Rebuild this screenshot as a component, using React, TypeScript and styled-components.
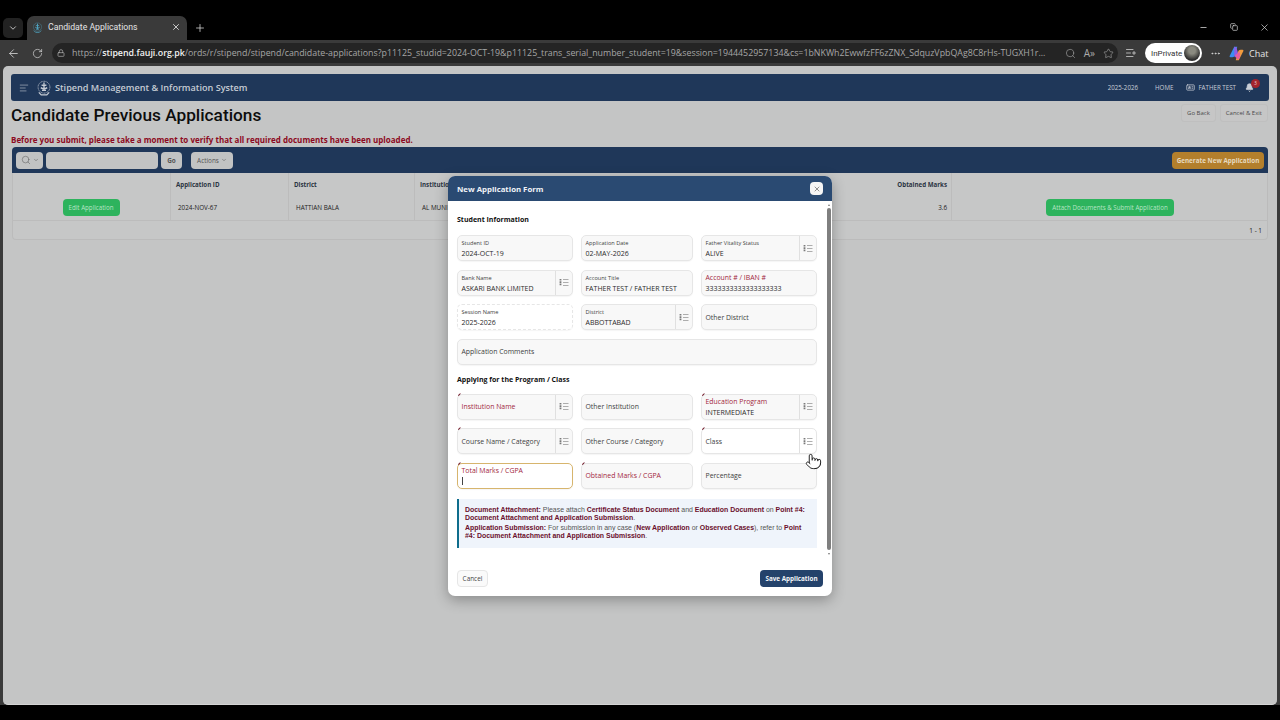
import React from 'react';
import styled, { createGlobalStyle } from 'styled-components';
import {
  ArrowLeft, RotateCw, Lock, Search, Star, X, Plus, ChevronDown, Minus, Copy,
  MoreHorizontal, ListPlus, Bell, IdCard, AlignLeft, Pointer,
} from 'lucide-react';

const GlobalStyle = createGlobalStyle`
  html, body { margin: 0; padding: 0; background: #000; }
  * { box-sizing: border-box; }
  body { font-family: "Open Sans", "Noto Sans", sans-serif; }
`;

const Frame = styled.div`
  position: relative;
  width: 1280px;
  height: 720px;
  overflow: hidden;
  background: #000;
  display: flex;
  flex-direction: column;
`;

/* browser chrome */
const TabStrip = styled.div`
  display: flex;
  align-items: center;
  height: 24px;
  margin-top: 16px;
  padding-left: 3px;
  color: #ddd;
`;

const TabMenu = styled.div`
  width: 20px;
  height: 20px;
  border-radius: 5px;
  background: #222;
  display: flex;
  align-items: center;
  justify-content: center;
  margin-right: 4px;
`;

const Tab = styled.div`
  width: 160px;
  height: 24px;
  border-radius: 7px 7px 0 0;
  background: #3a3a3a;
  display: flex;
  align-items: center;
  padding: 0 6px 2px 5px;
  font-family: Roboto, sans-serif;
  font-size: 8.7px;
  color: #e4e4e4;
`;

const TabTitle = styled.span`
  flex: 1;
  margin-left: 5px;
  white-space: nowrap;
`;

const NewTab = styled.div`
  margin-left: 7px;
  display: flex;
`;

const WindowButtons = styled.div`
  margin-left: auto;
  margin-bottom: 2px;
  width: 94px;
  display: flex;
  justify-content: space-between;
  padding-right: 10px;
  padding-left: 13px;
  align-items: center;
`;

const BrowserBar = styled.div`
  height: 26px;
  background: #3a3a3a;
  display: flex;
  align-items: center;
  padding-left: 7px;
  color: #d8d8d8;
`;

const NavIcons = styled.div`
  width: 45px;
  display: flex;
  gap: 12px;
  align-items: center;
`;

const AddressBar = styled.div`
  width: 1066px;
  height: 20px;
  border-radius: 10px;
  background: #242424;
  display: flex;
  align-items: center;
  padding: 0 4px 0 5px;
  gap: 7px;
`;

const Url = styled.div`
  flex: 1;
  font-family: "Open Sans", sans-serif;
  font-size: 8.83px;
  color: #a6a6a6;
  white-space: nowrap;
`;

const UrlHost = styled.span`
  color: #f2f2f2;
  font-weight: 600;
`;

const AddressTools = styled.div`
  display: flex;
  gap: 8px;
  align-items: center;
  color: #aaa;
`;

const ReadAloud = styled.span`
  font-size: 10px;
  color: #aaa;
`;

const BarRight = styled.div`
  flex: 1;
  display: flex;
  align-items: center;
  padding-left: 7px;
  gap: 8px;
`;

const InPrivate = styled.div`
  width: 57px;
  height: 20px;
  border-radius: 10px;
  background: #fff;
  color: #333;
  font-family: Roboto, sans-serif;
  font-size: 8px;
  display: flex;
  align-items: center;
  justify-content: space-between;
  padding: 0 2px 0 6px;
`;

const Avatar = styled.div`
  width: 16px;
  height: 16px;
  border-radius: 50%;
  background: radial-gradient(circle at 50% 35%, #8a8a80 25%, #2e2e2e 70%);
`;

const ChatLabel = styled.div`
  display: flex;
  align-items: center;
  gap: 5px;
  font-size: 9px;
  color: #e6e6e6;
`;

const WindowBody = styled.div`
  height: 639px;
  padding: 0 3px;
  background: #3a3a3a;
`;

/* page */
const Page = styled.main`
  position: relative;
  height: 100%;
  padding: 8px 8px 0;
  border-radius: 5px;
  border-bottom: 1px solid #d4d4d4;
  background: #c4c5c5;
`;

const NavBar = styled.header`
  height: 27px;
  border-radius: 3px;
  background: #1f3759;
  display: flex;
  align-items: center;
  padding: 0 6px 0 8px;
  color: #c6ccd4;
`;

const Brand = styled.div`
  margin-left: 7px;
  display: flex;
  align-items: center;
  gap: 3px;
  font-size: 9.1px;
  font-weight: 600;
`;

const NavLinks = styled.nav`
  margin-left: auto;
  display: flex;
  align-items: center;
  font-size: 6.2px;
  color: #c9ced6;
`;

const NavLink = styled.span<{ $gap: number }>`
  margin-right: ${p => p.$gap}px;
`;

const UserLink = styled.span`
  display: flex;
  align-items: center;
  gap: 3px;
  margin-right: 9px;
`;

const BellWrap = styled.span`
  position: relative;
  display: flex;
  margin-right: 9px;
`;

const BellBadge = styled.span`
  position: absolute;
  top: -4px;
  right: -6px;
  width: 9px;
  height: 9px;
  border-radius: 50%;
  background: #a3232c;
  color: #e8d0d0;
  font-size: 5px;
  line-height: 9px;
  text-align: center;
`;

const TitleRow = styled.div`
  height: 29px;
  padding-bottom: 2px;
  display: flex;
  align-items: center;
  justify-content: space-between;
`;

const PageTitle = styled.h1`
  margin: 0;
  font-family: Roboto, sans-serif;
  font-size: 17.25px;
  font-weight: 500;
  color: #0d0d0d;
`;

const TitleActions = styled.div`
  display: flex;
  gap: 4px;
  margin-top: -4px;
  margin-right: 1px;
`;

const GhostButton = styled.button`
  height: 18px;
  padding: 0 5px;
  border: 1px solid #bfbfbf;
  border-radius: 3px;
  background: #c6c6c6;
  color: #4a4a4a;
  font: 400 6px "Open Sans", sans-serif;
`;

const Warning = styled.div`
  margin-top: 3px;
  height: 14px;
  font-size: 8px;
  font-weight: 700;
  line-height: 13px;
  color: #8d0a22;
`;

const Region = styled.section`
  margin-left: 1px;
  width: 1256px;
  border-radius: 4px;
  background: #c6c7c7;
  box-shadow: inset 0 0 0 1px #bbb;
`;

const RegionBar = styled.div`
  height: 26px;
  border-radius: 4px 4px 0 0;
  background: #1f3759;
  display: flex;
  align-items: center;
  padding: 0 4px;
`;

const BarControl = styled.div<{ $w: number; $ml?: number; $bold?: boolean }>`
  width: ${p => p.$w}px;
  height: 17px;
  margin-left: ${p => p.$ml ?? 0}px;
  border-radius: 4px;
  background: #c2c3c3;
  color: #555;
  font-size: 6.4px;
  font-weight: ${p => (p.$bold ? 700 : 400)};
  display: flex;
  align-items: center;
  justify-content: center;
  gap: 2px;
`;

const GenerateButton = styled.button`
  margin-left: auto;
  width: 92px;
  height: 17px;
  border: 0;
  border-radius: 4px;
  background: #b37f2c;
  color: #e6d9bf;
  font: 700 6.3px "Open Sans", sans-serif;
  white-space: nowrap;
  padding: 0;
`;

const Table = styled.div`
  display: grid;
  grid-template-columns: 159px 118px 126px 537px 1fr;
`;

const Cell = styled.div<{ $head?: boolean; $center?: boolean; $last?: boolean }>`
  height: ${p => (p.$head ? 22 : 26)}px;
  display: flex;
  align-items: center;
  justify-content: ${p => (p.$center ? 'center' : 'flex-start')};
  padding: ${p => (p.$center ? '0' : `0 4px 0 ${p.$head ? 5 : 7}px`)};
  border-right: ${p => (p.$last ? '0' : '1px solid #bcbcbc')};
  border-bottom: ${p => (p.$head ? '0' : '1px solid #bcbcbc')};
  font-size: ${p => (p.$head ? 6.2 : 6.3)}px;
  font-weight: ${p => (p.$head ? 700 : 400)};
  color: ${p => (p.$head ? '#2b3442' : '#1d1d1d')};
  white-space: nowrap;
  overflow: hidden;
`;

const CellEnd = styled.span`
  margin-left: auto;
`;

const GreenButton = styled.button<{ $w: number }>`
  width: ${p => p.$w}px;
  height: 17px;
  border: 0;
  border-radius: 4px;
  background: #2db35d;
  color: #b8e4c6;
  font: 400 6.2px "Open Sans", sans-serif;
  white-space: nowrap;
  padding: 0;
`;

const Pagination = styled.div`
  height: 19px;
  display: flex;
  align-items: center;
  justify-content: flex-end;
  padding-right: 6px;
  font-size: 6.4px;
  color: #222;
`;

/* modal */
const ModalLayer = styled.div`
  position: absolute;
  inset: 0;
  padding-top: 2px;
  display: flex;
  align-items: center;
  justify-content: center;
`;

const Modal = styled.div`
  width: 384px;
  height: 420px;
  border-radius: 7px;
  background: #fff;
  box-shadow: 0 4px 14px rgba(0, 0, 0, 0.3);
  display: flex;
  flex-direction: column;
  overflow: hidden;
`;

const ModalHeader = styled.div`
  height: 25px;
  flex: none;
  background: #2a4a72;
  display: flex;
  align-items: center;
  justify-content: space-between;
  padding: 0 9px;
  color: #f0f3f7;
  font-size: 7.8px;
  font-weight: 700;
`;

const CloseButton = styled.div`
  width: 13px;
  height: 13px;
  border-radius: 4px;
  background: #f5f5f5;
  color: #5a5a5a;
  display: flex;
  align-items: center;
  justify-content: center;
`;

const ModalMiddle = styled.div`
  position: relative;
  flex: 1;
  min-height: 0;
  padding: 0 15px 0 9px;
`;

const ScrollTrack = styled.div`
  position: absolute;
  top: 7px;
  right: 1px;
  bottom: 10px;
  width: 4px;
  border-radius: 2px;
  background: #7f7f7f;

  &::before,
  &::after {
    content: '';
    position: absolute;
    left: 0.5px;
    border-left: 1.5px solid transparent;
    border-right: 1.5px solid transparent;
  }

  &::before {
    top: -4px;
    border-bottom: 2px solid #777;
  }

  &::after {
    bottom: -5px;
    border-top: 2px solid #777;
  }
`;

const SectionTitle = styled.h2<{ $top: number; $bottom: number }>`
  margin: ${p => p.$top}px 0 ${p => p.$bottom}px;
  font-size: 7px;
  line-height: 10px;
  font-weight: 700;
  color: #111;
`;

const FieldGrid = styled.div`
  display: grid;
  grid-template-columns: 116px 112px 116px;
  column-gap: 8px;
  row-gap: 8.5px;
`;

const FieldBox = styled.div<{ $full?: boolean; $dashed?: boolean; $focus?: boolean; $white?: boolean }>`
  position: relative;
  grid-column: ${p => (p.$full ? '1 / -1' : 'auto')};
  height: 26px;
  display: flex;
  border: 1px ${p => (p.$dashed ? 'dashed' : 'solid')} ${p => (p.$focus ? '#d7b56d' : '#e6e6e6')};
  border-radius: 5px;
  background: ${p => (p.$dashed || p.$focus || p.$white ? '#fff' : '#f8f8f8')};
  box-shadow: 0 1px 1px rgba(0, 0, 0, 0.04);
`;

const FieldBody = styled.div<{ $filled?: boolean }>`
  flex: 1;
  min-width: 0;
  display: flex;
  flex-direction: column;
  justify-content: center;
  padding-left: 3.5px;
  padding-top: ${p => (p.$filled ? 2 : 0)}px;
`;

const FloatLabel = styled.div<{ $req?: boolean; $large?: boolean }>`
  font-size: ${p => (p.$large ? 6.9 : 5.6)}px;
  line-height: ${p => (p.$large ? 9 : 8)}px;
  color: ${p => (p.$req ? '#a2263e' : '#3e3e3e')};
  white-space: nowrap;
`;

const FieldValue = styled.div`
  margin-top: 2px;
  font-size: 7px;
  line-height: 10px;
  color: #2a2a2a;
  white-space: nowrap;
`;

const Caret = styled.div`
  width: 1px;
  height: 8px;
  margin-top: 2px;
  background: #444;
`;

const PickButton = styled.div`
  width: 17px;
  flex: none;
  border-left: 1px solid #e0e0e0;
  display: flex;
  align-items: center;
  justify-content: center;
  color: #7a7a7a;
`;

const ReqMark = styled.span`
  position: absolute;
  top: -1px;
  left: 0;
  width: 3px;
  height: 1.4px;
  background: #6b1020;
  transform: rotate(-45deg);
`;

const Notice = styled.div`
  margin-top: 10px;
  height: 49px;
  padding: 7.5px 6px 0 6px;
  border-left: 2px solid #0f6d8c;
  background: #eff4fb;
  font-family: "Liberation Sans", Arial, sans-serif;
  font-size: 6.93px;
  line-height: 8px;
  color: #555;
`;

const NoticeLine = styled.p`
  margin: 0 0 2px;
`;

const Strong = styled.b`
  color: #6a0f2c;
  font-weight: 700;
`;

const ModalFooter = styled.div`
  height: 36px;
  flex: none;
  display: flex;
  align-items: flex-start;
  justify-content: space-between;
  padding: 10px 9px 0;
`;

const CancelButton = styled.button`
  width: 31px;
  height: 17px;
  border: 1px solid #e6e6e6;
  border-radius: 4px;
  background: #fafafa;
  color: #444;
  font: 400 6.4px "Open Sans", sans-serif;
  padding: 0;
`;

const SaveButton = styled.button`
  width: 63px;
  height: 17px;
  border: 0;
  border-radius: 4px;
  background: #24426b;
  color: #f3f5f8;
  font: 700 6.3px "Open Sans", sans-serif;
  padding: 0;
  white-space: nowrap;
`;

const Cursor = styled.div`
  position: absolute;
  left: 805px;
  top: 453px;
  display: flex;
  color: #111;
`;

type FieldDef = {
  label: string;
  value?: string;
  pick?: boolean;
  req?: boolean;
  mark?: boolean;
  full?: boolean;
  dashed?: boolean;
  focus?: boolean;
  white?: boolean;
};

const studentFields: FieldDef[] = [
  { label: 'Student ID', value: '2024-OCT-19' },
  { label: 'Application Date', value: '02-MAY-2026' },
  { label: 'Father Vitality Status', value: 'ALIVE', pick: true },
  { label: 'Bank Name', value: 'ASKARI BANK LIMITED', pick: true },
  { label: 'Account Title', value: 'FATHER TEST / FATHER TEST' },
  { label: 'Account # / IBAN #', value: '3333333333333333333', req: true },
  { label: 'Session Name', value: '2025-2026', dashed: true },
  { label: 'District', value: 'ABBOTTABAD', pick: true },
  { label: 'Other District' },
  { label: 'Application Comments', full: true },
];

const programFields: FieldDef[] = [
  { label: 'Institution Name', pick: true, req: true, mark: true },
  { label: 'Other Institution' },
  { label: 'Education Program', value: 'INTERMEDIATE', pick: true, req: true, mark: true },
  { label: 'Course Name / Category', pick: true, mark: true },
  { label: 'Other Course / Category' },
  { label: 'Class', pick: true, mark: true, white: true },
  { label: 'Total Marks / CGPA', req: true, mark: true, focus: true },
  { label: 'Obtained Marks / CGPA', req: true, mark: true },
  { label: 'Percentage' },
];

function PickIcon() {
  return (
    <svg width="10" height="9" viewBox="0 0 10 9" fill="none" stroke="currentColor">
      <path d="M1.5 1v7" strokeWidth="1.8" strokeDasharray="1.6 .7" />
      <path d="M4 1.5h5.5M4 4.5h5.5M4 7.5h5.5" strokeWidth="0.6" />
    </svg>
  );
}

function Field({ f }: { f: FieldDef }) {
  const filled = f.value !== undefined;
  return (
    <FieldBox $full={f.full} $dashed={f.dashed} $focus={f.focus} $white={f.white}>
      {f.mark && <ReqMark />}
      <FieldBody $filled={filled}>
        <FloatLabel $req={f.req} $large={(!filled && !f.focus) || f.req}>{f.label}</FloatLabel>
        {filled && <FieldValue>{f.value}</FieldValue>}
        {f.focus && <Caret />}
      </FieldBody>
      {f.pick && (
        <PickButton>
          <PickIcon />
        </PickButton>
      )}
    </FieldBox>
  );
}

function Crest({ size, color }: { size: number; color: string }) {
  return (
    <svg width={size} height={size} viewBox="0 0 20 20" fill="none" stroke={color} strokeWidth="0.9">
      <circle cx="10" cy="9" r="7.4" strokeDasharray="1.4 .6" />
      <path d="M10 3v10M7 6c2 1.2 4 1.2 6 0M6 9.5c2.4 1.8 5.6 1.8 8 0M7.5 13h5" strokeWidth="1.7" />
      <path d="M3.5 15.5l3 3.2h7l3-3.2" strokeWidth="1.5" />
    </svg>
  );
}

function Copilot() {
  return (
    <svg width="15" height="15" viewBox="0 0 20 20">
      <path d="M7 1h4L8 12c-.6 2-1.8 3-3.6 3H2C.8 15 .5 14 1 13z" fill="#3b8ef0" />
      <path d="M7 1c2 0 3 1 3.5 3L13 13l-4 2c-1 0-2-.5-2-2z" fill="#8d5de8" />
      <path d="M13 19H9l3-11c.6-2 1.8-3 3.6-3H18c1.2 0 1.5 1 1 2z" fill="#f29b3d" />
      <path d="M8 12c2-1 4-2 6-5l1 6c-.6 3-2 5-4 5z" fill="#e85d9e" />
    </svg>
  );
}

export default function App() {
  return (
    <Frame>
      <GlobalStyle />
      <TabStrip>
        <TabMenu><ChevronDown size={10} /></TabMenu>
        <Tab>
          <Crest size={11} color="#4fa6c4" />
          <TabTitle>Candidate Applications</TabTitle>
          <X size={10} />
        </Tab>
        <NewTab><Plus size={12} strokeWidth={1.5} /></NewTab>
        <WindowButtons>
          <Minus size={9} />
          <Copy size={8} />
          <X size={11} strokeWidth={1.5} />
        </WindowButtons>
      </TabStrip>

      <BrowserBar>
        <NavIcons>
          <ArrowLeft size={13} strokeWidth={1.5} />
          <RotateCw size={11} strokeWidth={1.5} />
        </NavIcons>
        <AddressBar>
          <Lock size={8} color="#b5b5b5" />
          <Url>
            https://<UrlHost>stipend.fauji.org.pk</UrlHost>/ords/r/stipend/stipend/candidate-applications?p11125_studid=2024-OCT-19&amp;p11125_trans_serial_number_student=19&amp;session=1944452957134&amp;cs=1bNKWh2EwwfzFF6zZNX_SdquzVpbQAg8C8rHs-TUGXH1r...
          </Url>
          <AddressTools>
            <Search size={11} strokeWidth={1.3} />
            <ReadAloud>A»</ReadAloud>
            <Star size={11} strokeWidth={1.3} />
          </AddressTools>
        </AddressBar>
        <BarRight>
          <ListPlus size={12} strokeWidth={1.5} />
          <InPrivate>InPrivate<Avatar /></InPrivate>
          <MoreHorizontal size={11} />
          <ChatLabel><Copilot />Chat</ChatLabel>
        </BarRight>
      </BrowserBar>

      <WindowBody>
        <Page>
          <NavBar>
            <AlignLeft size={10} strokeWidth={1.4} />
            <Brand>
              <Crest size={16} color="#c6ccd4" />
              Stipend Management &amp; Information System
            </Brand>
            <NavLinks>
              <NavLink $gap={17}>2025-2026</NavLink>
              <NavLink $gap={13}>HOME</NavLink>
              <UserLink><IdCard size={9} />FATHER TEST</UserLink>
              <BellWrap>
                <Bell size={9} fill="#c9ced6" />
                <BellBadge>3</BellBadge>
              </BellWrap>
            </NavLinks>
          </NavBar>

          <TitleRow>
            <PageTitle>Candidate Previous Applications</PageTitle>
            <TitleActions>
              <GhostButton>Go Back</GhostButton>
              <GhostButton>Cancel &amp; Exit</GhostButton>
            </TitleActions>
          </TitleRow>

          <Warning>Before you submit, please take a moment to verify that all required documents have been uploaded.</Warning>

          <Region>
            <RegionBar>
              <BarControl $w={27}>
                <Search size={10} strokeWidth={1.2} /><ChevronDown size={6} />
              </BarControl>
              <BarControl $w={112} $ml={3} />
              <BarControl $w={21} $ml={3} $bold>Go</BarControl>
              <BarControl $w={42} $ml={9}>
                Actions<ChevronDown size={6} />
              </BarControl>
              <GenerateButton>Generate New Application</GenerateButton>
            </RegionBar>
            <Table>
              <Cell $head />
              <Cell $head>Application ID</Cell>
              <Cell $head>District</Cell>
              <Cell $head>
                Institution
                <CellEnd>Obtained Marks</CellEnd>
              </Cell>
              <Cell $head $last />
              <Cell $center><GreenButton $w={57}>Edit Application</GreenButton></Cell>
              <Cell>2024-NOV-67</Cell>
              <Cell>HATTIAN BALA</Cell>
              <Cell>
                AL MUNI
                <CellEnd>3.6</CellEnd>
              </Cell>
              <Cell $center $last><GreenButton $w={128}>Attach Documents &amp; Submit Application</GreenButton></Cell>
            </Table>
            <Pagination>1 - 1</Pagination>
          </Region>

          <ModalLayer>
            <Modal>
              <ModalHeader>
                New Application Form
                <CloseButton><X size={8} /></CloseButton>
              </ModalHeader>
              <ModalMiddle>
                <ScrollTrack />
                <SectionTitle $top={14} $bottom={10}>Student Information</SectionTitle>
                <FieldGrid>
                  {studentFields.map(f => <Field key={f.label} f={f} />)}
                </FieldGrid>
                <SectionTitle $top={10} $bottom={9}>Applying for the Program / Class</SectionTitle>
                <FieldGrid>
                  {programFields.map(f => <Field key={f.label} f={f} />)}
                </FieldGrid>
                <Notice>
                  <NoticeLine>
                    <Strong>Document Attachment:</Strong> Please attach <Strong>Certificate Status Document</Strong> and <Strong>Education Document</Strong> on <Strong>Point #4: Document Attachment and Application Submission</Strong>.
                  </NoticeLine>
                  <NoticeLine>
                    <Strong>Application Submission:</Strong> For submission in any case (<Strong>New Application</Strong> or <Strong>Observed Cases</Strong>), refer to <Strong>Point #4: Document Attachment and Application Submission</Strong>.
                  </NoticeLine>
                </Notice>
              </ModalMiddle>
              <ModalFooter>
                <CancelButton>Cancel</CancelButton>
                <SaveButton>Save Application</SaveButton>
              </ModalFooter>
            </Modal>
          </ModalLayer>
        </Page>
      </WindowBody>

      <Cursor><Pointer size={17} strokeWidth={1.3} fill="#fff" /></Cursor>
    </Frame>
  );
}
